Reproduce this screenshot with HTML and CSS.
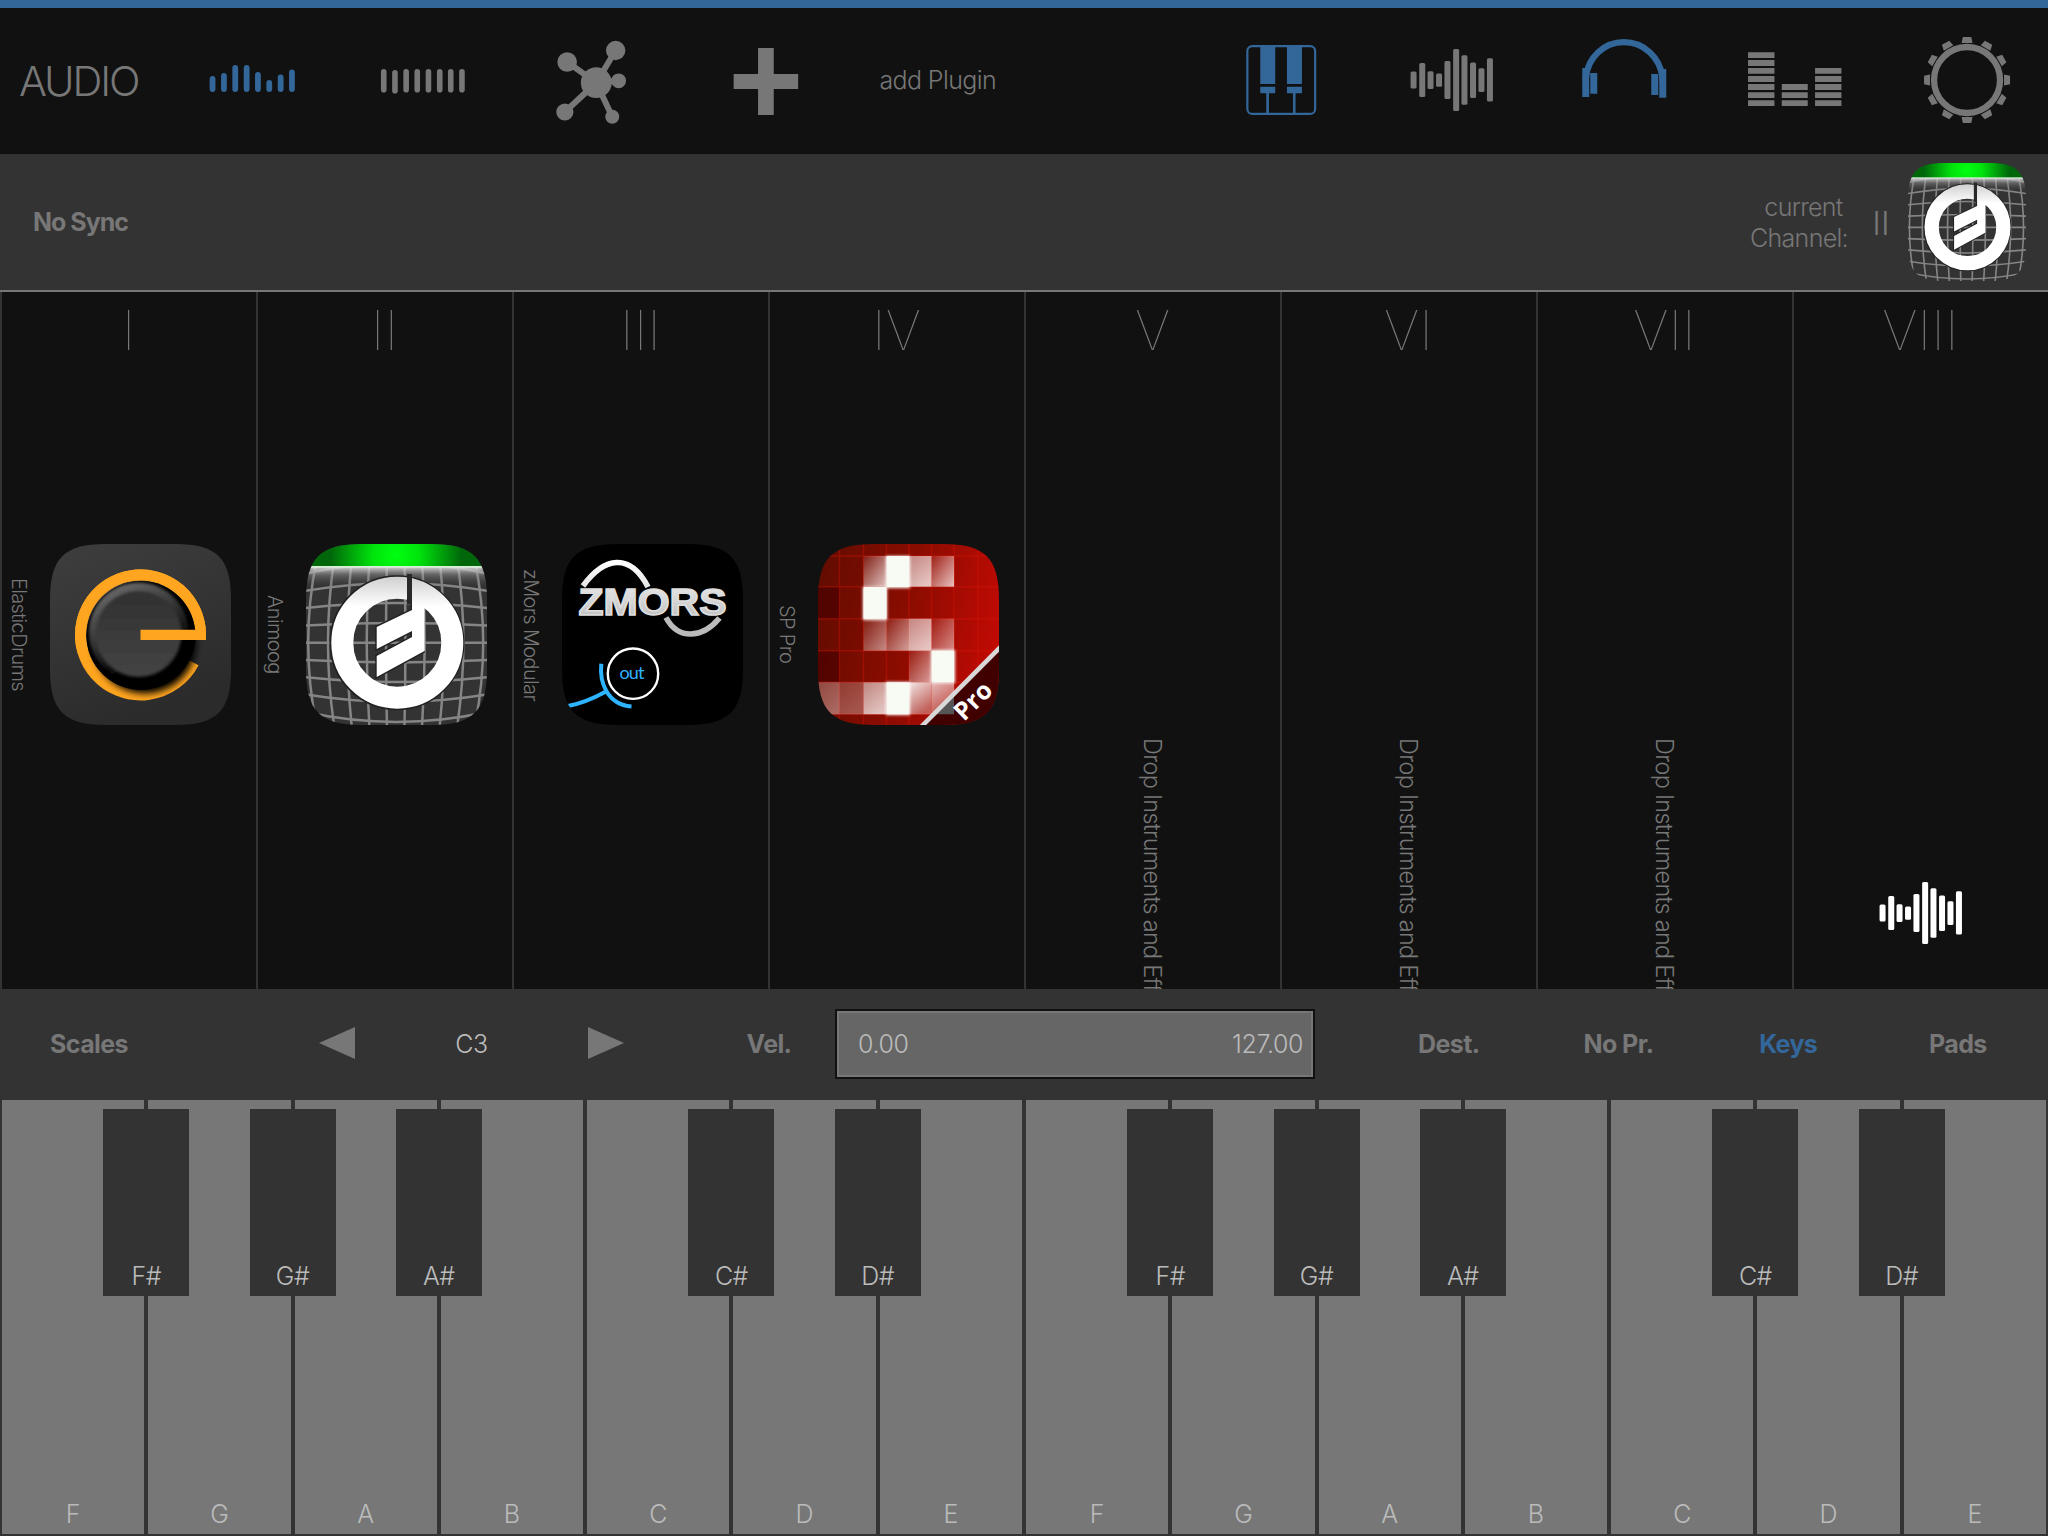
FILE: index.html
```
<!DOCTYPE html>
<html lang="en">
<head>
<meta charset="utf-8">
<title>Audio</title>
<link rel="stylesheet" href="styles.css">
</head>
<body>
<svg class="defs" width="0" height="0">
  <defs>
    <radialGradient id="green" gradientUnits="userSpaceOnUse" cx="90" cy="11" r="66">
      <stop offset="0" stop-color="#00ff10"/><stop offset=".35" stop-color="#00e40c"/><stop offset="1" stop-color="#00660a"/>
    </radialGradient>
    <linearGradient id="haze" x1="0" y1="0" x2="0" y2="1">
      <stop offset="0" stop-color="#e8e8e8" stop-opacity=".9"/><stop offset=".4" stop-color="#999" stop-opacity=".45"/><stop offset="1" stop-color="#555" stop-opacity="0"/>
    </linearGradient>
    <linearGradient id="moog" gradientUnits="userSpaceOnUse" x1="0" y1="32" x2="0" y2="62">
      <stop offset="0" stop-color="#cfcfcf"/><stop offset="1" stop-color="#fff"/>
    </linearGradient>
    <clipPath id="appClip"><path d="M0 56C0 14 14 0 56 0H125C167 0 181 14 181 56V125C181 167 167 181 125 181H56C14 181 0 167 0 125Z"/></clipPath>
    <linearGradient id="edBg" x1="0" y1="0" x2=".4" y2="1"><stop offset="0" stop-color="#3e3e3e"/><stop offset="1" stop-color="#2b2b2b"/></linearGradient>
    <linearGradient id="edFace" x1="0" y1="0" x2="0" y2="1"><stop offset="0" stop-color="#303030"/><stop offset="1" stop-color="#444"/></linearGradient>
    <linearGradient id="edRim" x1=".2" y1="0" x2=".6" y2=".8"><stop offset="0" stop-color="#707070"/><stop offset=".5" stop-color="#3a3a3a"/><stop offset="1" stop-color="#000"/></linearGradient>
    <filter id="soft" x="-30%" y="-30%" width="160%" height="160%"><feGaussianBlur stdDeviation="3.5"/></filter>
    <filter id="glow" x="-30%" y="-30%" width="160%" height="160%"><feGaussianBlur stdDeviation="1.5"/></filter>
    <linearGradient id="silver" gradientUnits="userSpaceOnUse" x1="0" y1="18" x2="0" y2="92"><stop offset="0" stop-color="#fff"/><stop offset=".35" stop-color="#e4e4e4"/><stop offset="1" stop-color="#aaa"/></linearGradient>
    <linearGradient id="spBg" x1="0" y1=".3" x2="1" y2=".5"><stop offset="0" stop-color="#640c00"/><stop offset=".5" stop-color="#8c0c00"/><stop offset="1" stop-color="#c00a04"/></linearGradient>
    <linearGradient id="cell" x1="0" y1="0" x2="1" y2="1"><stop offset="0" stop-color="#fff" stop-opacity=".08"/><stop offset="1" stop-color="#fff" stop-opacity=".75"/></linearGradient>
    <linearGradient id="cellHi" x1="0" y1="0" x2=".6" y2="1"><stop offset="0" stop-color="#fff" stop-opacity=".5"/><stop offset="1" stop-color="#fff" stop-opacity=".75"/></linearGradient>
    <linearGradient id="cellDown" x1="0" y1="0" x2=".5" y2="1"><stop offset="0" stop-color="#fff" stop-opacity=".9"/><stop offset="1" stop-color="#fff" stop-opacity=".35"/></linearGradient>
    <symbol id="wave" viewBox="1402.25 31 100 100">
      <rect x="1410.8" y="71.5" width="6" height="17" rx="1.5"/><rect x="1419.5" y="63" width="6" height="34" rx="1.5"/>
      <rect x="1427.8" y="71.3" width="6" height="17.6" rx="1.5"/><rect x="1436.3" y="73.5" width="6" height="13.3" rx="1.5"/>
      <rect x="1444.7" y="61" width="6" height="38" rx="1.5"/><rect x="1453.4" y="49" width="6" height="62" rx="1.5"/>
      <rect x="1461.7" y="55.3" width="6" height="49.4" rx="1.5"/><rect x="1470.3" y="62.4" width="6" height="35.6" rx="1.5"/>
      <rect x="1478.7" y="68.3" width="6" height="23.6" rx="1.5"/><rect x="1487.2" y="58.3" width="6" height="43.2" rx="1.5"/>
    </symbol>
    <symbol id="animoog" viewBox="0 0 181 181">
      <g clip-path="url(#appClip)">
        <rect width="181" height="181" fill="#333"/>
        <g fill="none" stroke="#858585" stroke-width="2.5">
          <path d="M80.9 17Q79.1 98 80.9 181M98.5 17Q100.3 98 98.5 181M63.3 17Q58.1 98 63.3 181M116.1 17Q121.3 98 116.1 181M45.6 17Q37.1 98 45.6 181M133.8 17Q142.3 98 133.8 181M28 17Q16 98 28 181M151.4 17Q163.4 98 151.4 181M10.4 17Q-6 98 10.4 181M169 17Q185.4 98 169 181"/>
          <path d="M0 29.5Q90.5 9 181 29.5M0 46.8Q90.5 31 181 46.8M0 64Q90.5 54 181 64M0 81.4Q90.5 76.6 181 81.4M0 98.7H181M0 116Q90.5 120.8 181 116M0 133.3Q90.5 142.7 181 133.3M0 150.6Q90.5 165.4 181 150.6M0 168Q90.5 188 181 168"/>
        </g>
        <rect y="23" width="181" height="20" fill="url(#haze)"/>
        <rect width="181" height="23" fill="url(#green)"/>
        <rect y="22" width="181" height="1.6" fill="#d8f0d8"/>
        <g fill="none" stroke="#222" stroke-width="3"><circle cx="91" cy="98.7" r="66"/><path d="M106 34V66L70.7 83V105L106 87V93L70.7 112V133L118.5 107"/></g>
        <circle cx="91.3" cy="98.7" r="55" fill="none" stroke="url(#moog)" stroke-width="22"/>
        <path d="M101 30H106V60H101Z" fill="#292929"/>
        <path d="M106 34V66L70.7 83V105L106 87V93L70.7 112V133L118.5 107V40Z" fill="url(#moog)"/>
      </g>
    </symbol>
  </defs>
</svg>

<div class="app">
  <header class="topbar">
    <div class="nav-cell title">AUDIO</div>
    <div class="nav-cell on"><svg class="ico" viewBox="201.75 31 100 100"><g stroke="currentColor" stroke-width="5.8" stroke-linecap="round"><path d="M212.3 79V89M223.7 76V89M235 68V89M246.4 68V89M257.7 75V89M269 83V89M280.4 77.3V89M291.7 72.5V89"/></g></svg></div>
    <div class="nav-cell"><svg class="ico" viewBox="373.25 31 100 100"><g stroke="currentColor" stroke-width="5.6" stroke-linecap="round"><path d="M384 71.8V89.8M395.2 72.8V90.8M406.4 71.8V89.8M417.5 71.8V89.8M428.7 71.8V89.8M440 71.8V89.8M451 71.8V89.8M462.2 71.8V89.8"/></g></svg></div>
    <div class="nav-cell"><svg class="ico" viewBox="544.75 31 100 100"><g fill="currentColor"><circle cx="596" cy="82.7" r="15.4"/><circle cx="615.4" cy="50.5" r="9.7"/><circle cx="566.9" cy="62" r="9.8"/><circle cx="618.4" cy="80.8" r="7.4"/><circle cx="564.6" cy="112" r="8.6"/><circle cx="612" cy="116.8" r="7"/></g><path d="M615.4 50.5L596 82.7L566.9 62M618.4 80.8L596 82.7L564.6 112M596 82.7L612 116.8" fill="none" stroke="currentColor" stroke-width="6"/></svg></div>
    <div class="nav-cell"><svg class="ico" viewBox="716.25 31 100 100"><path fill="currentColor" d="M758.3 48H774V74H798.4V89H774V115H758.3V89H733.9V74H758.3Z"/></svg></div>
    <div class="nav-cell add">add Plugin</div>
    <div class="nav-cell"></div>
    <div class="nav-cell on"><svg class="ico" viewBox="1230.75 31 100 100"><rect x="1247.1" y="46.1" width="67.8" height="67.8" rx="5" fill="none" stroke="currentColor" stroke-width="2.2"/><path fill="currentColor" d="M1260 46H1275V84H1260ZM1286.7 46H1301.7V84H1286.7ZM1260 86.8H1275V93.3H1268.7V114H1266V93.3H1260ZM1286.7 86.8H1301.7V93.3H1295.3V114H1292.7V93.3H1286.7Z"/></svg></div>
    <div class="nav-cell"><svg class="ico" fill="currentColor"><use href="#wave"/></svg></div>
    <div class="nav-cell on"><svg class="ico" viewBox="1573.75 31 100 100"><path d="M1585.5 82V78C1587.5 57 1604 42.2 1623.6 42.2S1660 57 1662.3 78V82" fill="none" stroke="currentColor" stroke-width="6.3"/><path fill="currentColor" d="M1582 68H1589V97H1582ZM1590 73H1597V93.7H1590ZM1651 74H1658V95H1651ZM1659 69H1666V97.7H1659Z"/></svg></div>
    <div class="nav-cell"><svg class="ico" viewBox="1745.25 31 100 100"><g stroke="currentColor" stroke-width="5.8"><path d="M1748.3 55.2H1774.7M1748.3 63H1774.7M1748.3 70.8H1774.7M1748.3 79H1774.7M1748.3 87H1774.7M1748.3 95.1H1774.7M1748.3 103.2H1774.7M1782 87H1808M1782 95.1H1808M1782 103.2H1808M1815.3 70.8H1841.7M1815.3 79H1841.7M1815.3 87H1841.7M1815.3 95.1H1841.7M1815.3 103.2H1841.7"/></g></svg></div>
    <div class="nav-cell"><svg class="ico" viewBox="-50.05 -49 100 100"><circle r="33" fill="none" stroke="currentColor" stroke-width="6.3"/><g fill="currentColor"><path id="tooth" d="M-5.5 -37L-4.2 -43H4.2L5.5 -37Z"/><use href="#tooth" transform="rotate(30)"/><use href="#tooth" transform="rotate(60)"/><use href="#tooth" transform="rotate(90)"/><use href="#tooth" transform="rotate(120)"/><use href="#tooth" transform="rotate(150)"/><use href="#tooth" transform="rotate(180)"/><use href="#tooth" transform="rotate(210)"/><use href="#tooth" transform="rotate(240)"/><use href="#tooth" transform="rotate(270)"/><use href="#tooth" transform="rotate(300)"/><use href="#tooth" transform="rotate(330)"/></g></svg></div>
  </header>

  <section class="status">
    <div class="sync">No Sync</div>
    <div class="current">
      <div class="current-label"><span class="shift">current</span><br>Channel:</div>
      <div class="current-no">II</div>
      <svg class="current-app"><use href="#animoog"/></svg>
    </div>
  </section>

  <main class="channels">
    <div class="channel"><div class="numeral">I</div>
      <div class="plugin"><span class="name">ElasticDrums</span>
        <svg class="app-icon" viewBox="0 0 181 181"><g clip-path="url(#appClip)"><rect width="181" height="181" fill="url(#edBg)"/>
          <path d="M143.7 118.700A60 60 0 1 1 150.500 90" fill="none" stroke="#ffa51f" stroke-width="11"/>
          <circle cx="95" cy="98" r="51.500" fill="#000" filter="url(#soft)"/>
          <path d="M33 108A60 60 0 1 1 150.500 90" fill="none" stroke="#ffa51f" stroke-width="11"/>
          <circle cx="91" cy="91.500" r="54.500" fill="#000"/>
          <circle cx="88.500" cy="88" r="49.500" fill="url(#edRim)" filter="url(#glow)"/><circle cx="88.500" cy="90" r="43" fill="url(#edFace)" filter="url(#glow)"/>
          <path d="M90.500 85.800H156V96H90.500Z" fill="#ffa51f"/></g></svg>
      </div></div>
    <div class="channel"><div class="numeral">II</div>
      <div class="plugin"><span class="name">Animoog</span><svg class="app-icon"><use href="#animoog"/></svg></div></div>
    <div class="channel"><div class="numeral">III</div>
      <div class="plugin"><span class="name">zMors Modular</span>
        <svg class="app-icon" viewBox="0 0 181 181"><g clip-path="url(#appClip)"><rect width="181" height="181" fill="#000"/>
          <path d="M21 42C42 13 68 8 86 43" fill="none" stroke="url(#silver)" stroke-width="5.6"/>
          <path d="M104 73.5C116 96 140 95 157.500 74" fill="none" stroke="#bbb" stroke-width="5.6"/>
          <text class="zmors" x="16.500" y="71" textLength="148" lengthAdjust="spacingAndGlyphs">ZMORS</text>
          <circle cx="71" cy="129.7" r="25.2" fill="none" stroke="#fff" stroke-width="2.4"/>
          <text class="out" x="57.500" y="135" textLength="25">out</text>
          <path d="M39.300 119.700C37.500 137 44 160 69.500 162.600M5 162.300C22 159 34 153 43 148" fill="none" stroke="#2eb4ff" stroke-width="4"/></g></svg>
      </div></div>
    <div class="channel"><div class="numeral">IV</div>
      <div class="plugin"><span class="name">SP Pro</span>
        <svg class="app-icon" viewBox="0 0 181 181"><g clip-path="url(#appClip)"><rect width="181" height="181" fill="url(#spBg)"/>
          <path d="M0 42.700H21.500V74.700H0ZM0 106.700H21.500V138.300H0Z" fill="#400" opacity=".6"/>
          <path d="M21.500 0V181M45.500 0V181M68.500 0V181M91 0V181M113.600 0V181M136 0V181M160 0V181M0 12H181M0 42.700H181M0 74.700H181M0 106.700H181M0 138.300H181M0 170.300H181" stroke="#e01808" stroke-width="1.4" opacity=".35"/>
          <g fill="url(#cell)"><rect x="45.500" y="12" width="23" height="30.700"/><rect x="113.600" y="12" width="22.500" height="30.700"/><rect x="45.500" y="74.700" width="23" height="32" opacity=".7"/><rect x="68.500" y="74.700" width="22.500" height="32" opacity=".8"/><rect x="113.600" y="74.700" width="22.500" height="32" opacity=".7"/><rect x="91" y="106.700" width="22.500" height="31.600" opacity=".8"/></g>
          <g fill="url(#cellHi)"><rect x="91" y="12" width="22.500" height="30.700"/><rect x="91" y="74.700" width="22.500" height="32"/><rect x="45.500" y="138.300" width="23" height="32"/><rect y="138.300" width="21.500" height="32" opacity=".5"/><rect x="21.500" y="138.300" width="24" height="32" opacity=".4"/></g>
          <g fill="url(#cellDown)"><rect x="91" y="138.300" width="22.500" height="32"/><rect x="113.600" y="138.300" width="22.500" height="32" opacity=".8"/></g>
          <path fill="#fff" filter="url(#glow)" d="M68 12H92V44H68ZM45 43H69V76H45ZM113 106H137V139H113ZM68 138H92V171H68Z"/>
          <path fill="#f8faf4" d="M68.500 12H91V43H68.500ZM45.500 43H68.500V74.700H45.500ZM113.600 106.700H136V138.300H113.600ZM68.500 138.300H91V170.300H68.500Z"/>
          <path d="M104 182L181 104V182Z" fill="#400000"/><path d="M116 170.300L136 150V170.300Z" fill="#555"/><path d="M103 183L183 102.500" stroke="#d8d8d8" stroke-width="4.500"/>
          <text class="pro" transform="translate(146 178) rotate(-45)">Pro</text></g></svg>
      </div></div>
    <div class="channel"><div class="numeral">V</div><div class="drop">Drop Instruments and Effects</div></div>
    <div class="channel"><div class="numeral">VI</div><div class="drop">Drop Instruments and Effects</div></div>
    <div class="channel"><div class="numeral">VII</div><div class="drop">Drop Instruments and Effects</div></div>
    <div class="channel"><div class="numeral">VIII</div><svg class="ico master" fill="#fff"><use href="#wave"/></svg></div>
  </main>

  <section class="controls">
    <div class="btn">Scales</div>
    <svg class="arrow" viewBox="0 0 36 32"><path fill="currentColor" d="M36 0V32L0 16Z"/></svg>
    <div class="octave">C3</div>
    <svg class="arrow" viewBox="0 0 36 32"><path fill="currentColor" d="M0 0V32L36 16Z"/></svg>
    <div class="btn vel">Vel.</div>
    <div class="range"><span>0.00</span><span>127.00</span></div>
    <div class="btn">Dest.</div>
    <div class="btn">No Pr.</div>
    <div class="btn on">Keys</div>
    <div class="btn">Pads</div>
  </section>

  <section class="keyboard">
    <div class="key">F<div class="sharp">F#</div></div>
    <div class="key">G<div class="sharp">G#</div></div>
    <div class="key">A<div class="sharp">A#</div></div>
    <div class="key">B</div>
    <div class="key">C<div class="sharp">C#</div></div>
    <div class="key">D<div class="sharp">D#</div></div>
    <div class="key">E</div>
    <div class="key">F<div class="sharp">F#</div></div>
    <div class="key">G<div class="sharp">G#</div></div>
    <div class="key">A<div class="sharp">A#</div></div>
    <div class="key">B</div>
    <div class="key">C<div class="sharp">C#</div></div>
    <div class="key">D<div class="sharp">D#</div></div>
    <div class="key">E</div>
  </section>
</div>
</body>
</html>
```
FILE: styles.css
```
* { box-sizing: border-box; }
body { margin: 0; background: #111; color: #777; font-family: Inter, Roboto, sans-serif; font-size: 25px; font-weight: 350; }
.defs { position: absolute; }
.app { width: 2048px; height: 1536px; display: flex; flex-direction: column; overflow: hidden; }

.topbar { height: 154px; flex: none; border-top: 8px solid #369; display: grid; grid-template-columns: 166px repeat(11, 171.5px); overflow: hidden; }
.nav-cell { display: flex; align-items: center; justify-content: center; white-space: nowrap; }
.nav-cell.title { justify-content: flex-start; padding-left: 19px; font-size: 41.5px; font-weight: 275; letter-spacing: -2.1px; }
.nav-cell.add { letter-spacing: -.6px; padding-bottom: 2px; }
.on { color: #369; }
.ico { width: 100px; height: 100px; flex: none; }

.status { height: 138px; flex: none; background: #333; border-bottom: 2px solid #777; display: flex; justify-content: space-between; align-items: center; padding: 0 22px 0 33px; }
.sync { font-weight: 650; letter-spacing: -1px; }
.current { display: flex; align-items: center; }
.current-label { line-height: 31px; text-align: center; width: 110px; margin-right: 14px; letter-spacing: -.7px; padding-top: 2px; }
.shift { padding-left: 9px; }
.current-no { font-size: 33px; font-weight: 275; width: 26px; margin-right: 14px; text-align: center; padding-top: 2px; }
.current-app { width: 118px; height: 118px; }

.channels { height: 697px; flex: none; display: grid; grid-template-columns: repeat(8, 256px); }
.channel { border-left: 2px solid #333; overflow: hidden; display: flex; flex-direction: column; }
.numeral { height: 76px; line-height: 76px; flex: none; text-align: center; font-size: 55px; font-weight: 120; padding-right: 1px; }
.plugin { display: flex; align-items: center; margin-top: 176px; height: 181px; }
.name { writing-mode: vertical-rl; width: 48px; line-height: 33px; font-size: 20px; padding-right: 15px; text-align: center; height: 181px; letter-spacing: -.65px; }
.app-icon { width: 181px; height: 181px; flex: none; }
.drop { writing-mode: vertical-rl; margin: 370px 2px 0 0; align-self: center; line-height: 30px; font-size: 23.5px; letter-spacing: -.75px; white-space: nowrap; height: 400px; flex: none; }
.master { margin: 496px 0 0 77px; }
.zmors { font: bold 36px "Liberation Sans", sans-serif; fill: url(#silver); stroke: #ddd; stroke-width: 1.6px; }
.out { font: 18px Lato, sans-serif; fill: #2eb4ff; }
.pro { font: bold 25px "Open Sans", sans-serif; fill: #fff; }

.controls { height: 111px; flex: none; background: #333; display: grid; grid-template-columns: 178px 92px 134px 135px 134px 30px 132px 480px 49px repeat(4, 169.7px); align-items: center; justify-items: center; }
.controls > :nth-child(2) { grid-column: 3; }
.controls > :nth-child(5) { grid-column: 7; }
.controls > :nth-child(7) { grid-column: 10; }
.btn { font-weight: 650; letter-spacing: -.6px; padding-bottom: 1px; }
.arrow { width: 36px; height: 32px; margin-bottom: 3px; }
.octave, .range { color: #bbb; letter-spacing: -.4px; }
.octave { padding-bottom: 1px; }
.range { width: 480px; height: 70px; margin-bottom: 2px; background: #666; border: 2px solid #111; box-shadow: inset 0 0 0 2px #777; display: flex; justify-content: space-between; align-items: center; padding: 0 10px 0 21px; }

.keyboard { flex: 1; background: #333; display: grid; grid-template-columns: repeat(14, 1fr); padding-bottom: 2px; }
.key { position: relative; margin: 0 2px; background: #777; color: #bbb; display: flex; align-items: flex-end; justify-content: center; line-height: 30px; padding-bottom: 5px; }
.sharp { position: absolute; z-index: 1; top: 9px; right: -45px; width: 86px; height: 187px; background: #333; display: flex; align-items: flex-end; justify-content: center; padding-bottom: 5px; letter-spacing: -.5px; }
```
